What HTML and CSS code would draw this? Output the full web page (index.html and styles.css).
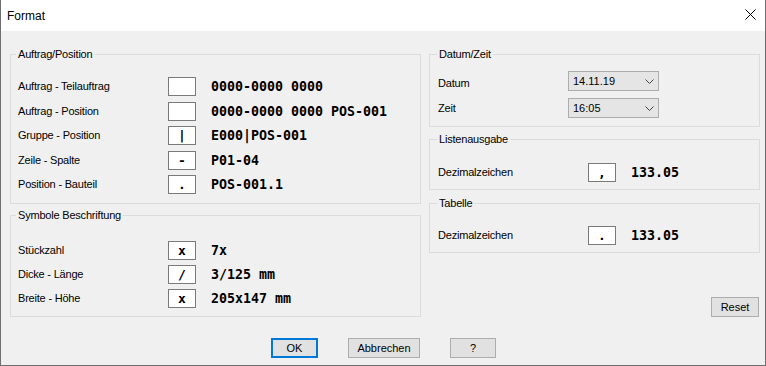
FILE: index.html
```html
<!DOCTYPE html>
<html lang="de">
<head>
    <meta charset="UTF-8">
    <title>Format</title>
    <link rel="stylesheet" href="styles.css">
</head>
<body>

<div class="window">
    <div class="titlebar">
        <span class="title">Format</span>
        <svg class="close" width="11" height="11" viewBox="0 0 11 11">
            <path d="M0.5 0.5 L10.5 10.5 M10.5 0.5 L0.5 10.5" stroke="#000" stroke-width="1" fill="none"/>
        </svg>
    </div>

    <div class="content">
        <div class="main">
            <div class="col-left">
                <fieldset class="group group-order">
                    <legend>Auftrag/Position</legend>
                    <div class="row"><span class="label">Auftrag - Teilauftrag</span><span class="sym"></span><span class="value">0000-0000 0000</span></div>
                    <div class="row"><span class="label">Auftrag - Position</span><span class="sym"></span><span class="value">0000-0000 0000 POS-001</span></div>
                    <div class="row"><span class="label">Gruppe - Position</span><span class="sym">|</span><span class="value">E000|POS-001</span></div>
                    <div class="row"><span class="label">Zeile - Spalte</span><span class="sym">-</span><span class="value">P01-04</span></div>
                    <div class="row"><span class="label">Position - Bauteil</span><span class="sym">.</span><span class="value">POS-001.1</span></div>
                </fieldset>

                <fieldset class="group group-symbols">
                    <legend>Symbole Beschriftung</legend>
                    <div class="row"><span class="label">Stückzahl</span><span class="sym">x</span><span class="value">7x</span></div>
                    <div class="row"><span class="label">Dicke - Länge</span><span class="sym">/</span><span class="value">3/125 mm</span></div>
                    <div class="row"><span class="label">Breite - Höhe</span><span class="sym">x</span><span class="value">205x147 mm</span></div>
                </fieldset>
            </div>

            <div class="col-right">
                <fieldset class="group group-date">
                    <legend>Datum/Zeit</legend>
                    <div class="rows">
                        <div class="row-date"><span class="label label-date">Datum</span>
                            <div class="combo"><span>14.11.19</span>
                                <svg width="9" height="5" viewBox="0 0 9 5"><path d="M0.5 0.5 L4.5 4.5 L8.5 0.5" stroke="#444" fill="none"/></svg>
                            </div>
                        </div>
                        <div class="row-date"><span class="label label-time">Zeit</span>
                            <div class="combo"><span>16:05</span>
                                <svg width="9" height="5" viewBox="0 0 9 5"><path d="M0.5 0.5 L4.5 4.5 L8.5 0.5" stroke="#444" fill="none"/></svg>
                            </div>
                        </div>
                    </div>
                </fieldset>

                <fieldset class="group group-list">
                    <legend>Listenausgabe</legend>
                    <div class="row-dec"><span class="label">Dezimalzeichen</span><span class="sym">,</span><span class="value">133.05</span></div>
                </fieldset>

                <fieldset class="group group-table">
                    <legend>Tabelle</legend>
                    <div class="row-dec"><span class="label">Dezimalzeichen</span><span class="sym">.</span><span class="value">133.05</span></div>
                </fieldset>

                <button class="btn btn-reset">Reset</button>
            </div>
        </div>

        <div class="actions">
            <button class="btn btn-default btn-ok">OK</button>
            <button class="btn btn-cancel">Abbrechen</button>
            <button class="btn btn-help">?</button>
        </div>
    </div>
</div>

</body>
</html>
```

FILE: styles.css
```css
body {
    margin: 0;
    background: #f0f0f0;
}
.window {
    width: 766px;
    height: 366px;
    box-sizing: border-box;
    border: 1px solid #6e6e6e;
    border-top: none;
    background: #f0f0f0;
    display: flex;
    flex-direction: column;
    font-family: "Liberation Sans", Arial, sans-serif;
    font-size: 11px;
    color: #000;
}
.titlebar {
    height: 31px;
    flex: none;
    background: #fff;
    display: flex;
    align-items: center;
    justify-content: space-between;
    padding: 0 9px 0 6px;
}
.title {
    font-size: 12px;
}
.close {
    margin-top: -2px;
}
.content {
    padding: 16px 5px 0 9px;
}
.main {
    display: flex;
    gap: 8px;
}
.col-left {
    width: 411px;
    display: flex;
    flex-direction: column;
}
.col-right {
    width: 331px;
    display: flex;
    flex-direction: column;
}
.group {
    margin: 0;
    border: 1px solid #dcdcdc;
    min-width: 0;
}
.group legend {
    padding: 0 2px;
    line-height: 14px;
    letter-spacing: -0.2px;
}
.label {
    letter-spacing: -0.2px;
    line-height: 19px;
}
.sym {
    width: 28px;
    height: 19px;
    box-sizing: border-box;
    border: 1px solid #7a7a7a;
    background: #fff;
    text-align: center;
    font-family: "DejaVu Sans Mono", monospace;
    font-weight: bold;
    font-size: 13px;
    line-height: 18px;
}
.value {
    margin-left: 15px;
    font-family: "DejaVu Sans Mono", monospace;
    font-weight: bold;
    font-size: 13.3px;
    line-height: 19px;
    white-space: pre;
}

/* linke Spalte */
.group-order {
    padding: 16px 0 3.5px 7px;
}
.group-order legend,
.group-symbols legend {
    margin-left: -2px;
}
.group-symbols {
    margin-top: 4px;
    padding: 19px 0 3px 7px;
}
.row {
    display: flex;
    align-items: flex-start;
    height: 24.5px;
}
.group-symbols .row {
    height: 24px;
}
.row .label {
    width: 150px;
}

/* rechte Spalte */
.group-date {
    padding: 10px 0 8px 8px;
}
.group-date legend,
.group-list legend,
.group-table legend {
    margin-left: -1px;
}
.rows {
    display: flex;
    flex-direction: column;
    gap: 7px;
}
.row-date {
    display: flex;
    align-items: center;
    height: 20px;
}
.row-date .label {
    width: 130px;
}
.label-date {
    position: relative;
    top: 2px;
}
.combo {
    width: 91px;
    height: 20px;
    box-sizing: border-box;
    border: 1px solid #adadad;
    background: #e5e5e5;
    display: flex;
    align-items: center;
    justify-content: space-between;
    padding: 0 4px;
}
.group-list {
    margin-top: 5px;
    padding: 17px 0 7px 8px;
}
.group-table {
    margin-top: 6px;
    padding: 16px 0 7px 8px;
}
.row-dec {
    display: flex;
    align-items: center;
    height: 19px;
}
.row-dec .label {
    width: 150px;
}

.btn {
    box-sizing: border-box;
    height: 20px;
    padding: 0;
    border: 1px solid #adadad;
    background: #e1e1e1;
    font-family: "Liberation Sans", Arial, sans-serif;
    font-size: 11px;
    color: #000;
}
.btn-default {
    border: 2px solid #0078d7;
}
.btn-reset {
    align-self: flex-end;
    width: 48px;
    margin-top: 44px;
    margin-right: 1px;
}
.actions {
    display: flex;
    gap: 30px;
    margin: 21px 0 0 261px;
}
.btn-ok {
    width: 47px;
}
.btn-cancel {
    width: 72px;
}
.btn-help {
    width: 46px;
}
```
